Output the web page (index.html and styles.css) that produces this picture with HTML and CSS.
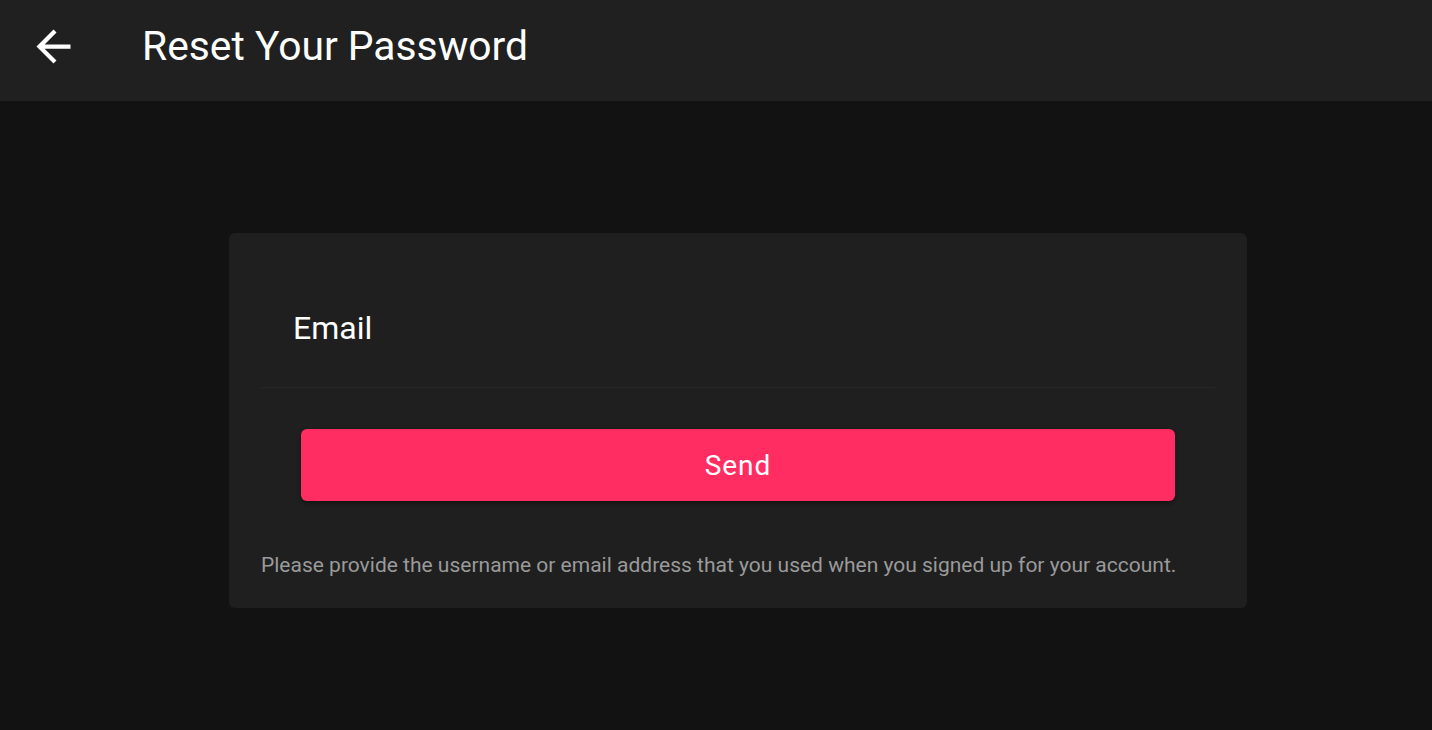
FILE: index.html
```html
<!DOCTYPE html>
<html>
<head>
<meta charset="utf-8">
<link rel="stylesheet" href="styles.css">
</head>
<body>
<header class="topbar">
  <button class="back" aria-label="Back">
    <svg width="51" height="51" viewBox="0 0 24 24"><path d="M20 11H7.83l5.59-5.59L12 4l-8 8 8 8 1.41-1.41L7.83 13H20v-2z" fill="#fff"/></svg>
  </button>
  <h1 class="title">Reset Your Password</h1>
</header>
<main class="content">
  <section class="card">
    <div class="field">
      <span class="label">Email</span>
    </div>
    <div class="actions">
      <button class="send">Send</button>
    </div>
    <p class="hint">Please provide the username or email address that you used when you signed up for your account.</p>
  </section>
</main>
</body>
</html>
```
FILE: styles.css
```css
* { box-sizing: border-box; }
html, body { margin: 0; padding: 0; }
body {
  background: #121212;
  font-family: Roboto, "Noto Sans", sans-serif;
  color: #fff;
  height: 730px;
  overflow: hidden;
}
.topbar {
  height: 101px;
  background: #202020;
  display: flex;
  align-items: center;
  padding: 0 0 9px 28px;
}
.back {
  background: none;
  border: 0;
  padding: 0;
  width: 51px;
  height: 51px;
  display: flex;
  cursor: pointer;
}
.title {
  margin: 0 0 0 63px;
  font-size: 40.8px;
  font-weight: 400;
  line-height: 1;
  color: #fff;
}
.content {
  display: flex;
  justify-content: center;
  padding: 132px 0 0 44px;
}
.card {
  width: 1018px;
  background: #1f1f1f;
  border-radius: 6px;
  padding: 0 32px 29px;
}
.field {
  height: 155px;
  border-bottom: 1px solid #272727;
  padding: 0 0 0 32px;
  display: flex;
  align-items: center;
}
.label {
  font-size: 32px;
  color: #fff;
  margin-top: 36px;
}
.actions {
  padding: 41px 40px 0;
}
.send {
  width: 100%;
  height: 72px;
  background: #ff2d61;
  color: #fff;
  border: 0;
  border-radius: 6px;
  font-family: Roboto, sans-serif;
  font-size: 28px;
  letter-spacing: 1px;
  box-shadow: 0 2px 4px rgba(0,0,0,0.4);
}
.hint {
  margin: 50px 0 0;
  font-size: 21px;
  line-height: 28px;
  color: #9a9a9a;
}
```
